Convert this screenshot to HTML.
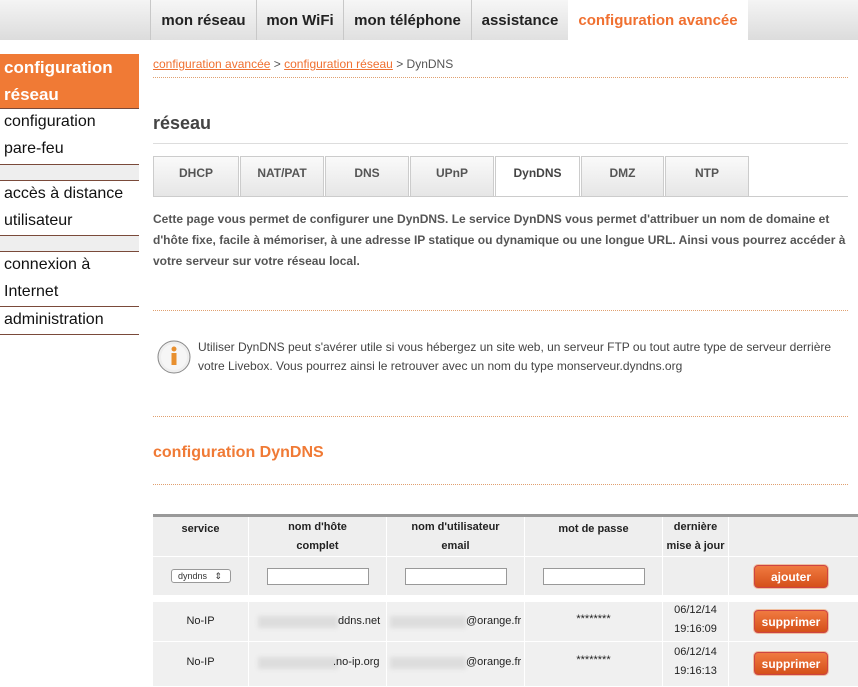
<!DOCTYPE html>
<html><head><meta charset="utf-8"><style>
*{margin:0;padding:0;box-sizing:border-box}
body{width:858px;height:686px;overflow:hidden;background:#fff;font-family:"Liberation Sans",Arial,sans-serif;color:#333;position:relative}
.abs{position:absolute}
.top{left:0;top:0;width:858px;height:40px;background:linear-gradient(#f4f4f4,#dcdcdc);}
.nt{position:absolute;top:0;height:40px;border-left:1px solid #c8c8c8;font-weight:bold;font-size:15px;color:#222;line-height:42px;text-align:center;background:linear-gradient(#f6f6f6,#e0e0e0)}
.side div{position:absolute;left:0;width:139px;font-size:16px;line-height:27px;padding-left:4px;color:#111}
.hr{position:absolute;left:0;width:139px;height:1px;background:#7a4a3a}
.dot{position:absolute;left:153px;width:695px;border-top:1px dotted #e0a070;height:0}
.tab{position:absolute;top:156px;height:40px;border:1px solid #ccc;border-bottom:none;background:linear-gradient(#fafafa,#e6e6e6);font-weight:bold;font-size:12px;color:#555;text-align:center;line-height:32px}
.col{position:absolute;font-size:11px;text-align:center;color:#222}
.btn{position:absolute;left:754px;width:74px;height:23px;border-radius:4px;background:linear-gradient(#f07a40,#d5501a);color:#fff;font-weight:bold;font-size:12px;text-align:center;line-height:23px;border:1px solid #c44;box-shadow:0 0 0 1px #f0c0a0}
.blur{position:absolute;height:12px;background:#ddd;filter:blur(2px)}
.in{position:absolute;top:568px;width:102px;height:17px;border:1px solid #999;background:#fff}
</style></head><body>
<div class="abs top"></div>
<div class="nt" style="left:150px;width:106px">mon réseau</div>
<div class="nt" style="left:256px;width:87px">mon WiFi</div>
<div class="nt" style="left:343px;width:128px">mon téléphone</div>
<div class="nt" style="left:471px;width:97px">assistance</div>
<div class="nt" style="left:568px;width:180px;background:#fff;color:#f07030;border-left:none">configuration avancée</div>

<div class="side">
<div style="top:54px;height:54px;background:#f07a35;color:#fff;font-weight:bold;font-size:17px">configuration<br>réseau</div>
<div style="top:108px">configuration<br>pare-feu</div>
<div style="top:164px;height:16px;background:#eee"></div>
<div style="top:180px">accès à distance<br>utilisateur</div>
<div style="top:236px;height:15px;background:#eee"></div>
<div style="top:251px">connexion à<br>Internet</div>
<div style="top:306px">administration</div>
</div>
<div class="hr" style="top:108px"></div><div class="hr" style="top:164px"></div><div class="hr" style="top:180px"></div><div class="hr" style="top:235px"></div><div class="hr" style="top:251px"></div><div class="hr" style="top:306px"></div><div class="hr" style="top:334px"></div>

<div class="abs" style="left:153px;top:57px;font-size:12px;color:#555"><u style="color:#f07030">configuration avancée</u> &gt; <u style="color:#f07030">configuration réseau</u> &gt; DynDNS</div>
<div class="dot" style="top:77px"></div>
<div class="abs" style="left:153px;top:113px;font-size:18px;font-weight:bold;color:#444">réseau</div>
<div class="abs" style="left:153px;top:143px;width:695px;height:1px;background:#ddd"></div>
<div class="tab" style="left:153px;width:86px">DHCP</div>
<div class="tab" style="left:240px;width:84px">NAT/PAT</div>
<div class="tab" style="left:325px;width:84px">DNS</div>
<div class="tab" style="left:410px;width:84px">UPnP</div>
<div class="tab" style="left:495px;width:85px;background:#fff;color:#444">DynDNS</div>
<div class="tab" style="left:581px;width:83px">DMZ</div>
<div class="tab" style="left:665px;width:84px">NTP</div>
<div class="abs" style="left:153px;top:196px;width:695px;height:1px;background:#ccc"></div>
<div class="abs" style="left:153px;top:209px;width:700px;font-size:12px;font-weight:bold;color:#555;line-height:21px">Cette page vous permet de configurer une DynDNS. Le service DynDNS vous permet d'attribuer un nom de domaine et d'hôte fixe, facile à mémoriser, à une adresse IP statique ou dynamique ou une longue URL. Ainsi vous pourrez accéder à votre serveur sur votre réseau local.</div>
<div class="dot" style="top:310px"></div>
<svg class="abs" style="left:157px;top:340px" width="34" height="36"><circle cx="17" cy="17" r="16" fill="#eee" stroke="#888"/><circle cx="17" cy="17" r="13" fill="#f6f6f6"/><circle cx="17" cy="9" r="2.5" fill="#e89030"/><rect x="14.5" y="13" width="5" height="12" fill="#e89030"/></svg>
<div class="abs" style="left:198px;top:338px;width:650px;font-size:12px;color:#444;line-height:19px">Utiliser DynDNS peut s'avérer utile si vous hébergez un site web, un serveur FTP ou tout autre type de serveur derrière votre Livebox. Vous pourrez ainsi le retrouver avec un nom du type monserveur.dyndns.org</div>
<div class="dot" style="top:416px"></div>
<div class="abs" style="left:153px;top:444px;font-size:16px;font-weight:bold;color:#f07a35">configuration DynDNS</div>
<div class="dot" style="top:484px"></div>

<div class="abs" style="left:153px;top:514px;width:705px;height:3px;background:#999"></div>
<div class="abs" style="left:153px;top:517px;width:705px;height:78px;background:#eee"></div>
<div class="abs" style="left:153px;top:556px;width:705px;height:1px;background:#fff"></div>
<div class="abs" style="left:153px;top:602px;width:705px;height:84px;background:#f0f0f0"></div>
<div class="abs" style="left:153px;top:641px;width:705px;height:1px;background:#fff"></div>
<div class="abs" style="left:248px;top:517px;width:1px;height:170px;background:#fff"></div>
<div class="abs" style="left:386px;top:517px;width:1px;height:170px;background:#fff"></div>
<div class="abs" style="left:524px;top:517px;width:1px;height:170px;background:#fff"></div>
<div class="abs" style="left:662px;top:517px;width:1px;height:170px;background:#fff"></div>
<div class="abs" style="left:728px;top:517px;width:1px;height:170px;background:#fff"></div>

<div class="col" style="left:153px;top:520px;width:95px;font-weight:bold;line-height:19px">service</div>
<div class="col" style="left:249px;top:518px;width:137px;font-weight:bold;line-height:19px">nom d'hôte<br>complet</div>
<div class="col" style="left:387px;top:518px;width:137px;font-weight:bold;line-height:19px">nom d'utilisateur<br>email</div>
<div class="col" style="left:525px;top:520px;width:137px;font-weight:bold;line-height:19px">mot de passe</div>
<div class="col" style="left:663px;top:518px;width:65px;font-weight:bold;line-height:19px">dernière<br>mise à jour</div>

<div class="abs" style="left:171px;top:569px;width:60px;height:14px;border:1px solid #999;border-radius:3px;background:#fff;font-size:9px;line-height:12px;padding-left:6px">dyndns &nbsp;&nbsp;⇕</div>
<div class="in" style="left:267px"></div><div class="in" style="left:405px"></div><div class="in" style="left:543px"></div>
<div class="btn" style="top:565px">ajouter</div>

<div class="col" style="left:153px;top:615px;width:95px">No-IP</div>
<div class="blur" style="left:258px;top:616px;width:80px"></div><div class="col" style="left:338px;top:615px">ddns.net</div>
<div class="blur" style="left:390px;top:616px;width:76px"></div><div class="col" style="left:466px;top:615px">@orange.fr</div>
<div class="col" style="left:525px;top:613px;width:137px">********</div>
<div class="col" style="left:663px;top:601px;width:65px;line-height:19px">06/12/14<br>19:16:09</div>
<div class="btn" style="top:610px">supprimer</div>

<div class="col" style="left:153px;top:656px;width:95px">No-IP</div>
<div class="blur" style="left:258px;top:657px;width:80px"></div><div class="col" style="left:333px;top:656px">.no-ip.org</div>
<div class="blur" style="left:390px;top:657px;width:76px"></div><div class="col" style="left:466px;top:656px">@orange.fr</div>
<div class="col" style="left:525px;top:654px;width:137px">********</div>
<div class="col" style="left:663px;top:643px;width:65px;line-height:19px">06/12/14<br>19:16:13</div>
<div class="btn" style="top:652px">supprimer</div>
</body></html>
